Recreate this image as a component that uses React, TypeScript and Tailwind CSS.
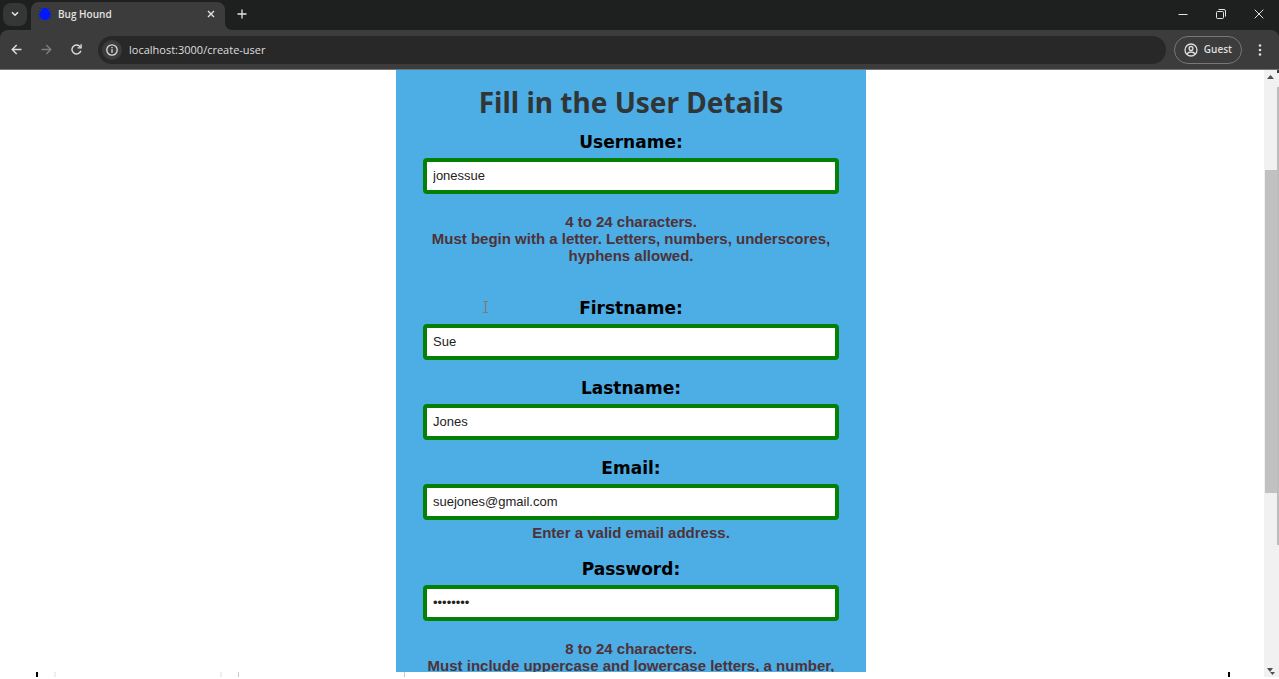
import React, { useState } from "react";

type FieldProps = {
  id: string;
  label: string;
  type?: string;
  initial: string;
  hint?: string[];
  hintClass?: string;
};

function Field({ id, label, type = "text", initial, hint, hintClass = "" }: FieldProps) {
  const [value, setValue] = useState(initial);
  return (
    <div className="flex flex-col">
      <label
        htmlFor={id}
        className="text-center font-['DejaVu_Sans',sans-serif] text-[17px] font-bold leading-6 text-black"
      >
        {label}
      </label>
      <input
        id={id}
        type={type}
        value={value}
        onChange={(e) => setValue(e.target.value)}
        aria-describedby={hint ? id + "-hint" : undefined}
        className="mt-1 h-9 w-full rounded border-4 border-[#048004] bg-white px-1.5 pb-0.5 font-['Liberation_Sans',Arial,sans-serif] text-[13px] text-[#222] outline-none"
      />
      {hint && (
        <p
          id={id + "-hint"}
          className={
            "text-center font-['Liberation_Sans',Arial,sans-serif] text-[15px] font-bold leading-[17px] text-[#4d3238] " +
            hintClass
          }
        >
          {hint.map((line) => (
            <span key={line} className="block">
              {line}
            </span>
          ))}
        </p>
      )}
    </div>
  );
}

function TabStrip() {
  return (
    <header className="flex h-[30px] shrink-0 items-center bg-[#1d201f] pb-0.5 text-[#e3e3e3]">
      <button
        aria-label="Search tabs"
        className="ml-[3px] flex h-[23px] w-6 items-center justify-center rounded-lg bg-[#353736]"
      >
        <svg width="8" height="6" viewBox="0 0 8 6" fill="none" stroke="currentColor" strokeWidth="1.6">
          <path d="M1 1.2l3 3 3-3" />
        </svg>
      </button>
      <div className="-mb-0.5 ml-1 flex h-[28px] w-[194px] items-center self-end rounded-t-lg bg-[#3c3c3c] pb-1 pl-[7px] pr-2.5">
        <svg width="14" height="14" viewBox="0 0 14 14" fill="#0018ff" stroke="#0018ff">
          <path
            d="M4.500 3L3 1M9.500 3L11 1M3 5.500L.8 4M11 5.500L13.200 4M2.500 7.500H.3M11.500 7.500h2.200M3 9.800L.8 11.200M11 9.800l2.200 1.400"
            strokeWidth="1"
            fill="none"
          />
          <path
            d="M7 .9c1.700 0 2.700.9 2.900 2.300C11.300 4.200 12 5.600 12 7.200c0 3.300-2.200 5.900-5 5.900s-5-2.600-5-5.900c0-1.600.7-3 2.100-4C4.300 1.800 5.300.9 7 .9z"
            stroke="none"
          />
        </svg>
        <span className="ml-1.5 flex-1 font-['Open_Sans','Noto_Sans',sans-serif] text-[10px] font-semibold">
          Bug Hound
        </span>
        <button aria-label="Close tab">
          <svg width="8" height="8" viewBox="0 0 8 8" stroke="currentColor" strokeWidth="1.4">
            <path d="M1 1l6 6M7 1L1 7" />
          </svg>
        </button>
      </div>
      <svg width="7" height="7" viewBox="0 0 7 7" className="-mb-0.5 self-end" fill="#3c3c3c">
        <path d="M0 0v7h7A7 7 0 0 1 0 0z" />
      </svg>
      <button aria-label="New tab" className="px-[5px] py-1">
        <svg width="10" height="10" viewBox="0 0 10 10" stroke="currentColor" strokeWidth="1.300">
          <path d="M5 .5v9M.5 5h9" />
        </svg>
      </button>
      <div className="ml-auto mr-[15px] flex items-center gap-7">
        <button aria-label="Minimize">
          <svg width="10" height="10" viewBox="0 0 10 10" stroke="currentColor">
            <path d="M.5 5.500h9" />
          </svg>
        </button>
        <button aria-label="Restore">
          <svg width="10" height="10" viewBox="0 0 10 10" fill="none" stroke="currentColor">
            <rect x=".5" y="2.500" width="7" height="7" rx="1" />
            <path d="M2.500 .5H8a1.500 1.500 0 0 1 1.500 1.500v5.500" />
          </svg>
        </button>
        <button aria-label="Close window">
          <svg width="10" height="10" viewBox="0 0 10 10" stroke="currentColor">
            <path d="M.7.7l8.600 8.600M9.300.7L.7 9.300" />
          </svg>
        </button>
      </div>
    </header>
  );
}

function Toolbar() {
  return (
    <nav className="flex h-10 shrink-0 items-center rounded-t-lg border-b border-[#747474] bg-[#3c3c3c] text-[#dedede]">
      <button aria-label="Back" className="ml-[11px]">
        <svg width="11" height="11" viewBox="0 0 11 11" fill="none" stroke="currentColor" strokeWidth="1.400">
          <path d="M10.500 5.500H1.200M5.700 1L1.200 5.500l4.500 4.500" />
        </svg>
      </button>
      <button aria-label="Forward" className="ml-[19px] text-[#7d7d7d]">
        <svg width="11" height="11" viewBox="0 0 11 11" fill="none" stroke="currentColor" strokeWidth="1.400">
          <path d="M.5 5.500h9.300M5.300 1l4.500 4.500-4.500 4.500" />
        </svg>
      </button>
      <button aria-label="Reload" className="ml-[19px]">
        <svg width="11" height="11" viewBox="0 0 11 11" fill="none" stroke="currentColor" strokeWidth="1.400">
          <path d="M9.800 6.700A4.500 4.500 0 1 1 9.300 3.200" />
          <path d="M10.100.3v3.600H6.500" />
        </svg>
      </button>
      <div className="ml-4 flex h-7 min-w-0 flex-1 items-center rounded-full bg-[#282828] pl-1">
        <button
          aria-label="Site information"
          className="flex size-5 items-center justify-center rounded-full bg-[#3c3c3c]"
        >
          <svg width="12" height="12" viewBox="0 0 12 12" fill="none" stroke="currentColor" strokeWidth="1.300">
            <circle cx="6" cy="6" r="5.200" />
            <path d="M6 5.300v3.500M6 3v1.300" />
          </svg>
        </button>
        <input
          aria-label="Address"
          defaultValue="localhost:3000/create-user"
          className="ml-[7px] min-w-0 flex-1 bg-transparent pt-0.5 font-['Open_Sans','Noto_Sans',sans-serif] text-[11px] outline-none"
        />
      </div>
      <button className="ml-2 flex h-7 items-center gap-1.5 rounded-full border border-[#777] px-[9px] font-['Open_Sans','Noto_Sans',sans-serif] text-[10px] font-semibold">
        <svg width="14" height="14" viewBox="0 0 14 14" fill="none" stroke="currentColor" strokeWidth="1.300">
          <circle cx="7" cy="7" r="6" />
          <circle cx="7" cy="5.400" r="1.900" />
          <path d="M2.800 11.200C4 9.600 5.400 9 7 9s3 .6 4.200 2.200" />
        </svg>
        Guest
      </button>
      <button aria-label="Menu" className="ml-4 mr-[17px]">
        <svg width="4" height="14" viewBox="0 0 4 14" fill="currentColor">
          <circle cx="2" cy="2.500" r="1.300" />
          <circle cx="2" cy="7" r="1.300" />
          <circle cx="2" cy="11.500" r="1.300" />
        </svg>
      </button>
    </nav>
  );
}

function Scrollbar() {
  return (
    <div aria-hidden="true" className="flex w-[15px] shrink-0 bg-[#f1f1f1]">
      <div className="flex flex-1 flex-col items-center">
        <svg width="7" height="4" viewBox="0 0 7 4" className="mt-[5px] shrink-0" fill="#505050">
          <path d="M3.500 0L7 4H0z" />
        </svg>
        <div className="flex w-full flex-1 flex-col pl-px">
          <div className="flex-[91]" />
          <div className="flex-[324] bg-[#c1c1c1]" />
          <div className="flex-[175]" />
        </div>
        <svg width="9" height="7" viewBox="0 0 9 7" className="mb-0.5 shrink-0" fill="#505050">
          <path d="M1 0h6L4 4zM4 4h5L6.500 7z" />
        </svg>
      </div>
      <div className="flex w-0.5 flex-col">
        <div className="h-[3px] bg-[#3c3c3c]" />
        <div className="flex-[14]" />
        <div className="flex-[458] bg-[#bcbcbc]" />
        <div className="flex-[132]" />
      </div>
    </div>
  );
}

export default function App() {
  return (
    <div className="flex h-screen flex-col overflow-hidden bg-[#1d201f]">
      <TabStrip />
      <Toolbar />
      <div className="flex min-h-0 flex-1 border-b-2 border-white bg-white">
        <div className="flex min-w-0 flex-1 flex-col">
          <main className="min-h-0 flex-1 overflow-hidden pr-0.5">
            <form
              onSubmit={(e) => e.preventDefault()}
              className="relative mx-auto flex min-h-full w-full max-w-[470px] flex-col bg-[#4dade5] px-[27px] pb-8 pt-3"
            >
              <h1 className="mb-2 text-center font-['Noto_Sans','Open_Sans',sans-serif] text-[28px] font-bold leading-10 text-[#303638]">
                Fill in the User Details
              </h1>
              <Field
                id="username"
                label="Username:"
                initial="jonessue"
                hint={[
                  "4 to 24 characters.",
                  "Must begin with a letter. Letters, numbers, underscores,",
                  "hyphens allowed.",
                ]}
                hintClass="mt-[19px]"
              />
              <div className="mt-8 flex flex-col gap-4">
                <Field id="firstname" label="Firstname:" initial="Sue" />
                <Field id="lastname" label="Lastname:" initial="Jones" />
                <Field
                  id="email"
                  label="Email:"
                  type="email"
                  initial="suejones@gmail.com"
                  hint={["Enter a valid email address."]}
                  hintClass="mt-1"
                />
                <Field
                  id="password"
                  label="Password:"
                  type="password"
                  initial="Abcd123!"
                  hint={[
                    "8 to 24 characters.",
                    "Must include uppercase and lowercase letters, a number,",
                  ]}
                  hintClass="mt-[19px]"
                />
              </div>
              <svg
                aria-hidden="true"
                width="7"
                height="12"
                viewBox="0 0 7 12"
                fill="none"
                stroke="#80796f"
                strokeWidth="1.200"
                className="absolute left-[86px] top-[231px]"
              >
                <path d="M1 .5h2l.5.500.5-.500h2M3.500 1v10M1 11.500h2l.5-.500.5.500h2" />
              </svg>
            </form>
          </main>
          <div aria-hidden="true" className="flex h-[5px] shrink-0">
            <span className="ml-9 w-0.5 bg-black" />
            <span className="ml-4 w-0.5 bg-[#eee]" />
            <span className="ml-[164px] w-0.5 bg-[#eee]" />
            <span className="ml-4 w-px bg-[#c8c8c8]" />
            <span className="ml-[165px] w-px bg-[#c8c8c8]" />
            <span className="ml-auto mr-[34px] w-0.5 bg-black" />
          </div>
        </div>
        <Scrollbar />
      </div>
    </div>
  );
}
